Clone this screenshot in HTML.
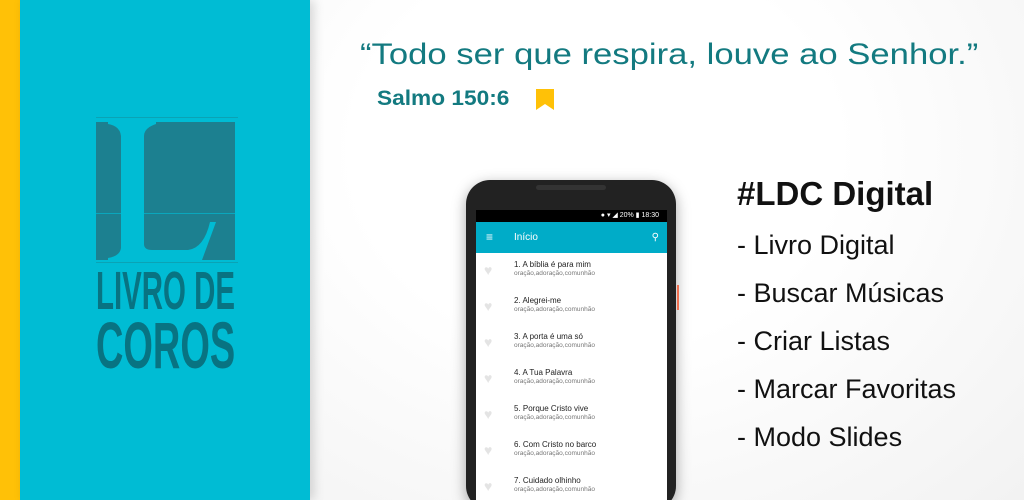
<!DOCTYPE html>
<html><head><meta charset="utf-8"><style>
*{margin:0;padding:0;box-sizing:border-box}
html,body{width:1024px;height:500px;overflow:hidden}
body{position:relative;background:#fff;font-family:"Liberation Sans",sans-serif}
.bg{position:absolute;left:310px;top:0;width:714px;height:500px;background:radial-gradient(ellipse at 40% 30%,#fff 40%,#f2f2f2 100%)}
.yel{position:absolute;left:0;top:0;width:20px;height:500px;background:#ffc107}
.cy{position:absolute;left:20px;top:0;width:290px;height:500px;background:#00bcd4;box-shadow:4px 0 10px rgba(0,0,0,.15)}
.ab{position:absolute}
.dk{background:#1c8090}
.logo{position:absolute;color:#087382;font-family:"Liberation Sans Narrow","Liberation Sans",sans-serif;font-weight:bold;transform-origin:left top;white-space:nowrap}
.q{position:absolute;left:360px;top:38px;font-size:30px;color:#137a80;white-space:nowrap;transform:scaleX(1.155);transform-origin:left top}
.s{position:absolute;left:377px;top:87px;font-size:21px;font-weight:bold;color:#137a80;white-space:nowrap;transform:scaleX(1.08);transform-origin:left top}
.r{position:absolute;left:737px;font-size:27px;color:#111;white-space:nowrap}
.phone{position:absolute;left:466px;top:180px;width:210px;height:330px;background:#222;border-radius:24px;box-shadow:0 4px 14px rgba(0,0,0,.35)}
.scr{position:absolute;left:476px;top:210px;width:191px;height:290px;background:#fff;overflow:hidden}
.row{position:absolute;left:0;width:191px;height:36px}
.row .t{position:absolute;left:38px;top:4px;font-size:8px;color:#222;white-space:nowrap}
.row .u{position:absolute;left:38px;top:14px;font-size:6.5px;color:#777;white-space:nowrap}
.row .h{position:absolute;left:8px;top:6px;font-size:14px;color:#e4e4e4}
</style></head><body>
<div class="bg"></div>
<div class="yel"></div>
<div class="cy">
 <div class="ab" style="left:76px;top:117px;width:142px;height:1px;background:#0aa3b5"></div>
 <div class="ab dk" style="left:76px;top:122px;width:139px;height:138px"></div>
 <div class="ab" style="left:76px;top:213px;width:139px;height:1px;background:#0aa7bd"></div>
 <svg class="ab" style="left:76px;top:122px" width="139" height="138" viewBox="0 0 139 138">
  <path d="M12 0 H60 V2 Q48 6 48 14 V122 Q48 128 56 128 H92 Q108 126 114 100 H120 L106 138 H12 V136 Q24 134 25 126 V14 Q24 4 12 2 Z" fill="#00bcd4"/>
 </svg>
 <div class="ab" style="left:76px;top:262px;width:142px;height:1px;background:#0aa3b5"></div>
 <div class="logo" style="left:76px;top:264px;font-size:54px;transform:scaleX(0.545);line-height:54px">LIVRO DE</div>
 <div class="logo" style="left:76px;top:314px;font-size:66px;transform:scaleX(0.575);line-height:62px">COROS</div>
</div>
<div class="q">“Todo ser que respira, louve ao Senhor.”</div>
<div class="s">Salmo 150:6</div>
<svg class="ab" style="left:535px;top:89px" width="20" height="22"><path d="M1 0H19V21L10 15L1 21Z" fill="#ffc107"/></svg>
<div class="r" style="top:175px;font-size:33px;font-weight:bold">#LDC Digital</div>
<div class="r" style="top:230px">- Livro Digital</div>
<div class="r" style="top:278px">- Buscar Músicas</div>
<div class="r" style="top:326px">- Criar Listas</div>
<div class="r" style="top:374px">- Marcar Favoritas</div>
<div class="r" style="top:422px">- Modo Slides</div>
<div class="phone"><div class="ab" style="left:70px;top:5px;width:70px;height:5px;border-radius:3px;background:#333"></div></div>
<div class="ab" style="left:677px;top:285px;width:2px;height:25px;background:#f07050"></div>
<div class="scr">
 <div class="ab" style="left:0;top:0;width:191px;height:12px;background:#000;color:#fff;font-size:7px;text-align:right;padding-right:8px;line-height:12px">● ▾ ◢ 20% ▮ 18:30</div>
 <div class="ab" style="left:0;top:12px;width:191px;height:31px;background:#00acc8;color:#fff;font-size:10px;line-height:31px">
  <span style="position:absolute;left:10px;font-size:12px">≡</span><span style="position:absolute;left:38px">Início</span><span style="position:absolute;right:8px;font-size:10px">⚲</span></div>
 <div class="row" style="top:46px"><span class="h">♥</span><span class="t">1. A bíblia é para mim</span><span class="u">oração,adoração,comunhão</span></div>
 <div class="row" style="top:82px"><span class="h">♥</span><span class="t">2. Alegrei-me</span><span class="u">oração,adoração,comunhão</span></div>
 <div class="row" style="top:118px"><span class="h">♥</span><span class="t">3. A porta é uma só</span><span class="u">oração,adoração,comunhão</span></div>
 <div class="row" style="top:154px"><span class="h">♥</span><span class="t">4. A Tua Palavra</span><span class="u">oração,adoração,comunhão</span></div>
 <div class="row" style="top:190px"><span class="h">♥</span><span class="t">5. Porque Cristo vive</span><span class="u">oração,adoração,comunhão</span></div>
 <div class="row" style="top:226px"><span class="h">♥</span><span class="t">6. Com Cristo no barco</span><span class="u">oração,adoração,comunhão</span></div>
 <div class="row" style="top:262px"><span class="h">♥</span><span class="t">7. Cuidado olhinho</span><span class="u">oração,adoração,comunhão</span></div>
</div>
</body></html>
